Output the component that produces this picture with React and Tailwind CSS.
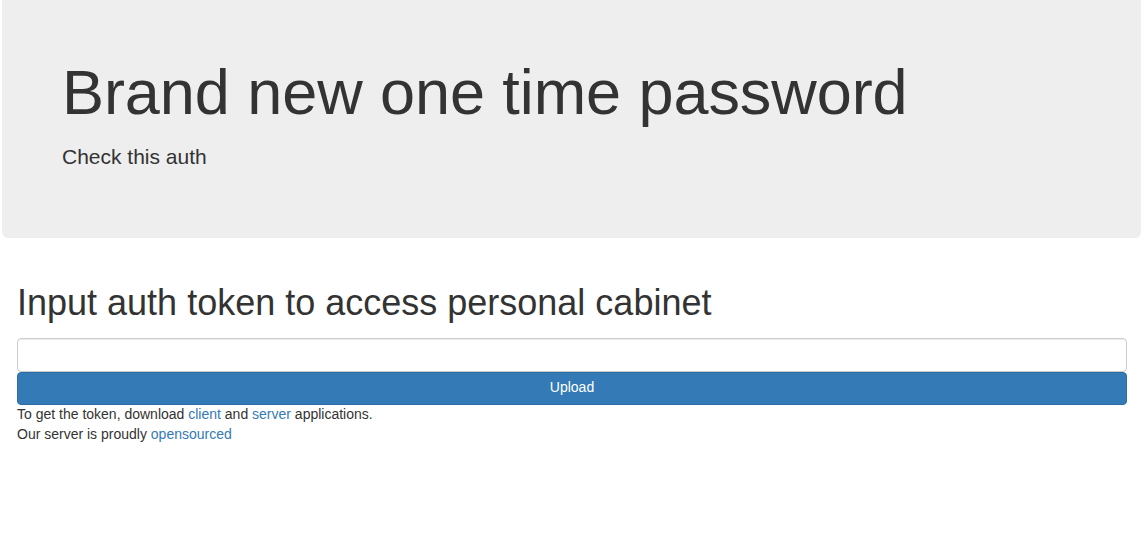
const App = () => {
  return (
    <div
      className="min-h-[544px] bg-white text-[#333]"
      style={{ fontFamily: '"Liberation Sans", Arial, sans-serif' }}
    >
      <div className="pl-[2px] pr-[7px]">
        <div className="bg-[#eee] rounded-b-[6px] pl-[60px] pr-[60px] pt-[58px] pb-[66px]">
          <h1 className="text-[63px] leading-[1.1] font-normal tracking-[-0.07px]">
            Brand new one time password
          </h1>
          <p className="mt-[15px] text-[21px] leading-[30px] font-normal">
            Check this auth
          </p>
        </div>
      </div>

      <div className="pl-[17px] pr-[21px] pt-[45px]">
        <h1 className="text-[36px] leading-[1.1] font-normal">
          Input auth token to access personal cabinet
        </h1>
        <form className="mt-[15px] flex flex-col">
          <input
            type="text"
            className="h-[34px] w-full rounded-[4px] border border-[#ccc] bg-white px-3 text-[14px] shadow-[inset_0_1px_1px_rgba(0,0,0,0.075)] outline-none"
          />
          <button
            type="button"
            className="h-[33px] w-full rounded-[4px] border border-[#2e6da4] bg-[#337ab7] pb-[2px] text-[14px] leading-[20px] text-white"
          >
            Upload
          </button>
        </form>
        <div className="-mt-[1px] text-[14px] leading-[20px]">
          <div>
            To get the token, download{" "}
            <a href="#" className="text-[#337ab7]">
              client
            </a>{" "}
            and{" "}
            <a href="#" className="text-[#337ab7]">
              server
            </a>{" "}
            applications.
          </div>
          <div>
            Our server is proudly{" "}
            <a href="#" className="text-[#337ab7]">
              opensourced
            </a>
          </div>
        </div>
      </div>
    </div>
  );
};

export default App;
